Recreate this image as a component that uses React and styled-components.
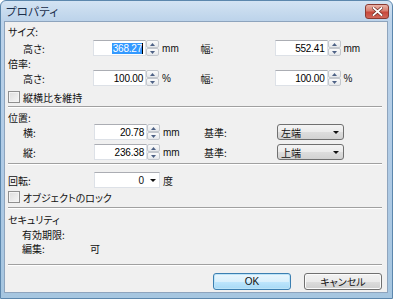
import React from "react";
import styled, { createGlobalStyle } from "styled-components";

const Global = createGlobalStyle`
  html, body { margin: 0; padding: 0; background: #ffffff; }
  body { width: 393px; height: 299px; overflow: hidden; }
  * { box-sizing: border-box; }
`;

const JP = `"Noto Sans CJK JP", "Noto Sans", sans-serif`;
const NUM = `"Liberation Sans", Arial, sans-serif`;

const Window = styled.div`
  width: 393px;
  height: 299px;
  display: flex;
  flex-direction: column;
  border: 1px solid #5c87ad;
  border-radius: 6px 6px 0 0;
  background: linear-gradient(180deg, #d3e3f3 0px, #bcd3ea 20px, #aecae5 60%, #a6c6e0 100%);
  font-family: ${JP};
  font-size: 10px;
  color: #111;
  font-feature-settings: "palt";
`;

const TitleBar = styled.div`
  height: 20px;
  display: flex;
  align-items: flex-start;
  justify-content: space-between;
  padding: 0 3px 0 5px;
`;

const Title = styled.div`
  font-size: 11.5px;
  line-height: 20px;
  color: #1c2f4c;
  letter-spacing: 0.2px;
`;

const CloseButton = styled.div`
  margin-top: 3px;
  width: 24px;
  height: 15px;
  border: 1px solid #8b3a31;
  border-radius: 3px;
  background: linear-gradient(180deg, #eab4a8 0%, #d77d6f 45%, #c8483b 55%, #d0685b 100%);
  display: flex;
  align-items: center;
  justify-content: center;
`;

const Client = styled.div`
  flex: 1;
  margin: 0 4px 5px 3px;
  border: 1px solid #8ea4bd;
  background: #f0f0f0;
  display: flex;
  flex-direction: column;
  padding: 0 5px 0 3px;
`;

const SectionLabel = styled.div`
  height: ${(p) => p.$h || 14}px;
  margin-top: ${(p) => p.$mt || 0}px;
  display: flex;
  align-items: center;
  white-space: nowrap;
`;

const Row = styled.div`
  height: ${(p) => p.$h || 16}px;
  margin-top: ${(p) => p.$mt || 0}px;
  display: flex;
  align-items: center;
`;

const LabelCell = styled.div`
  width: 86px;
  padding-left: 15px;
  white-space: nowrap;
`;

const RightLabel = styled.div`
  width: 75px;
  padding-left: ${(p) => p.$pl || 0}px;
  white-space: nowrap;
`;

const Unit = styled.div`
  width: ${(p) => p.$w || 42}px;
  padding-left: 3px;
  font-family: ${(p) => (p.$jp ? JP : NUM)};
  font-size: 10px;
  white-space: nowrap;
`;

const InputGroup = styled.div`
  display: flex;
  width: 66px;
  height: 16px;
`;

const TextBox = styled.div`
  width: 53px;
  height: 16px;
  background: #fff;
  border: 1px solid #dde1e7;
  border-top-color: #abadb3;
  display: flex;
  align-items: center;
  justify-content: flex-end;
  padding-right: 2px;
  font-family: ${NUM};
  font-size: 10px;
  letter-spacing: -0.2px;
  color: #000;
`;

const Selected = styled.span`
  background: #3399ff;
  color: #fff;
  line-height: 11px;
  padding: 0 0 0 1px;
  border-right: 1px solid #000;
`;

const Spinner = styled.div`
  width: 13px;
  height: 16px;
  display: flex;
  flex-direction: column;
`;

const SpinHalf = styled.div`
  flex: 1;
  border: 1px solid #c3c7cd;
  border-radius: 2px;
  background: linear-gradient(180deg, #fbfbfb, #e6e8eb);
  display: flex;
  align-items: center;
  justify-content: center;
`;

const Combo = styled.div`
  width: 66px;
  height: 16px;
  background: #fff;
  border: 1px solid #dde1e7;
  border-top-color: #abadb3;
  display: flex;
  align-items: center;
  justify-content: flex-end;
  font-family: ${NUM};
  font-size: 10px;
  padding-right: 3px;
  gap: 6px;
`;

const Select = styled.div`
  width: 67px;
  height: 16px;
  border: 1px solid #707070;
  border-radius: 3px;
  background: linear-gradient(180deg, #f4f4f4 0%, #ebebeb 50%, #dddddd 51%, #d2d2d2 100%);
  display: flex;
  align-items: center;
  justify-content: space-between;
  padding: 0 4px 0 3px;
`;

const CheckRow = styled.div`
  height: 14px;
  margin-top: ${(p) => p.$mt || 0}px;
  display: flex;
  align-items: center;
  gap: 3px;
  white-space: nowrap;
`;

const CheckBox = styled.div`
  width: 12px;
  height: 12px;
  border: 1px solid #8f8f8f;
  background: linear-gradient(135deg, #dcdcdc, #f6f6f6);
  box-shadow: inset 0 0 0 1px #f4f4f4;
`;

const Separator = styled.div`
  margin-top: ${(p) => p.$mt || 0}px;
  height: 2px;
  border-top: 1px solid #a0a0a0;
  border-bottom: 1px solid #ffffff;
`;

const InfoRow = styled.div`
  height: 14px;
  margin-top: ${(p) => p.$mt || 0}px;
  display: flex;
  align-items: center;
  padding-left: 14px;
  white-space: nowrap;
`;

const InfoLabel = styled.div`
  width: 68px;
`;

const ButtonBar = styled.div`
  margin-top: 7px;
  display: flex;
  justify-content: flex-end;
  gap: 13px;
  padding-right: 0px;
`;

const Button = styled.div`
  width: 78px;
  height: 17px;
  border: 1px solid ${(p) => (p.$primary ? "#3c7fb1" : "#707070")};
  border-radius: 3px;
  background: ${(p) =>
    p.$primary
      ? "linear-gradient(180deg, #eaf6fd 0%, #d9f0fc 50%, #bee6fd 51%, #a7d9f5 100%)"
      : "linear-gradient(180deg, #f2f2f2 0%, #ebebeb 50%, #dddddd 51%, #cfcfcf 100%)"};
  box-shadow: inset 0 0 0 1px ${(p) => (p.$primary ? "#bde4f8" : "#fbfbfb")};
  display: flex;
  align-items: center;
  justify-content: center;
  font-family: ${(p) => (p.$num ? NUM : JP)};
  font-size: 10px;
`;

const Up = () => (
  <svg width="5" height="3" viewBox="0 0 5 3">
    <path d="M0 3 L2.5 0 L5 3 Z" fill="#4d6185" />
  </svg>
);
const Down = () => (
  <svg width="5" height="3" viewBox="0 0 5 3">
    <path d="M0 0 L2.5 3 L5 0 Z" fill="#4d6185" />
  </svg>
);
const Caret = () => (
  <svg width="6" height="3" viewBox="0 0 6 3">
    <path d="M0 0 L3 3 L6 0 Z" fill="#111" />
  </svg>
);

const Spin = () => (
  <Spinner>
    <SpinHalf><Up /></SpinHalf>
    <SpinHalf><Down /></SpinHalf>
  </Spinner>
);

const NumField = ({ value, selected }) => (
  <InputGroup>
    <TextBox>{selected ? <Selected>{value}</Selected> : value}</TextBox>
    <Spin />
  </InputGroup>
);

export default function App() {
  return (
    <>
      <Global />
      <Window>
        <TitleBar>
          <Title>プロパティ</Title>
          <CloseButton>
            <svg width="11" height="9" viewBox="0 0 11 9">
              <path d="M1.5 1 L9.5 8 M9.5 1 L1.5 8" stroke="#6b2a22" strokeWidth="3.2" strokeLinecap="square" />
              <path d="M1.5 1 L9.5 8 M9.5 1 L1.5 8" stroke="#ffffff" strokeWidth="1.8" strokeLinecap="square" />
            </svg>
          </CloseButton>
        </TitleBar>
        <Client>
          <SectionLabel $mt={2}>サイズ:</SectionLabel>
          <Row $mt={2}>
            <LabelCell>高さ:</LabelCell>
            <NumField value="368.27" selected />
            <Unit>mm</Unit>
            <RightLabel>幅:</RightLabel>
            <NumField value="552.41" />
            <Unit>mm</Unit>
          </Row>
          <SectionLabel>倍率:</SectionLabel>
          <Row>
            <LabelCell>高さ:</LabelCell>
            <NumField value="100.00" />
            <Unit>%</Unit>
            <RightLabel>幅:</RightLabel>
            <NumField value="100.00" />
            <Unit>%</Unit>
          </Row>
          <CheckRow $mt={4}>
            <CheckBox />
            縦横比を維持
          </CheckRow>
          <Separator $mt={2} />
          <SectionLabel $mt={3} $h={13}>位置:</SectionLabel>
          <Row>
            <LabelCell>横:</LabelCell>
            <NumField value="20.78" />
            <Unit>mm</Unit>
            <RightLabel $pl={2}>基準:</RightLabel>
            <Select>左端<Caret /></Select>
          </Row>
          <Row $mt={4}>
            <LabelCell>縦:</LabelCell>
            <NumField value="236.38" />
            <Unit>mm</Unit>
            <RightLabel $pl={2}>基準:</RightLabel>
            <Select>上端<Caret /></Select>
          </Row>
          <Separator $mt={3} />
          <Row $mt={7}>
            <LabelCell as="div" style={{ paddingLeft: 0 }}>回転:</LabelCell>
            <Combo>0<Caret /></Combo>
            <Unit $jp>度</Unit>
          </Row>
          <CheckRow $mt={2}>
            <CheckBox />
            オブジェクトのロック
          </CheckRow>
          <Separator $mt={3} />
          <SectionLabel $mt={3}>セキュリティ</SectionLabel>
          <InfoRow $mt={1}>
            <InfoLabel>有効期限:</InfoLabel>
          </InfoRow>
          <InfoRow>
            <InfoLabel>編集:</InfoLabel>
            可
          </InfoRow>
          <Separator $mt={9} />
          <ButtonBar>
            <Button $primary $num>OK</Button>
            <Button>キャンセル</Button>
          </ButtonBar>
        </Client>
      </Window>
    </>
  );
}
